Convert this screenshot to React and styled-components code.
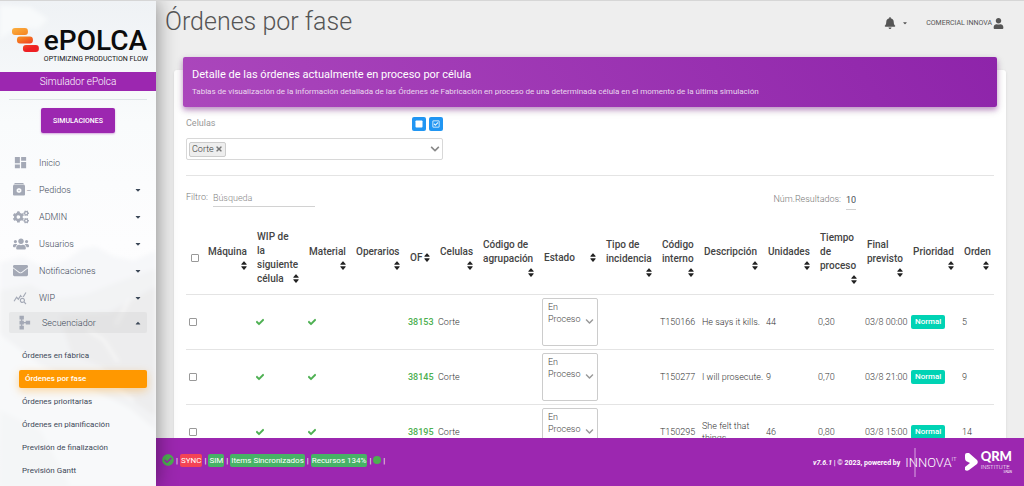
import React, { useState } from 'react'

import styled, { createGlobalStyle, css } from 'styled-components'
import { FaBell, FaUser, FaSort, FaCheck, FaCogs, FaUsers, FaEnvelope, FaChevronDown, FaTimes, FaCheckCircle, FaCaretDown, FaCaretUp, FaSquare, FaRegCheckSquare } from 'react-icons/fa'
import { MdDashboard, MdQueryStats, MdSchema } from 'react-icons/md'

const menu = [
    { label: 'Inicio', icon: <MdDashboard size={15} /> },
    { label: 'Pedidos', icon: <BoxIcon />, caret: true },
    { label: 'ADMIN', icon: <FaCogs size={16} />, caret: true },
    { label: 'Usuarios', icon: <FaUsers size={16} />, caret: true },
    { label: 'Notificaciones', icon: <FaEnvelope size={15} />, caret: true },
    { label: 'WIP', icon: <MdQueryStats size={14} />, caret: true },
]

const submenu = [
    'Órdenes en fábrica',
    'Órdenes por fase',
    'Órdenes prioritarias',
    'Órdenes en planificación',
    'Previsión de finalización',
    'Previsión Gantt',
]

const columns = [
    { label: 'Máquina', width: 49 },
    { label: 'WIP de\nla\nsiguiente\ncélula', width: 52 },
    { label: 'Material', width: 47 },
    { label: 'Operarios', width: 54 },
    { label: 'OF', width: 30 },
    { label: 'Celulas', width: 43 },
    { label: 'Código de\nagrupación', width: 61 },
    { label: 'Estado', width: 62 },
    { label: 'Tipo de\nincidencia', width: 56 },
    { label: 'Código\ninterno', width: 42 },
    { label: 'Descripción', width: 64 },
    { label: 'Unidades', width: 52 },
    { label: 'Tiempo\nde\nproceso', width: 47 },
    { label: 'Final\nprevisto', width: 46 },
    { label: 'Prioridad', width: 51 },
    { label: 'Orden', width: 35 },
]

const orders = [
    { of: '38153', code: 'T150166', desc: 'He says it kills.', units: 44, time: '0,30', end: '03/8 00:00', order: 5 },
    { of: '38145', code: 'T150277', desc: 'I will prosecute.', units: 9, time: '0,70', end: '03/8 21:00', order: 9 },
    { of: '38195', code: 'T150295', desc: 'She felt that\nthings', units: 46, time: '0,80', end: '03/8 15:00', order: 14 },
]

function BoxIcon() {
    return (
        <>
            <svg width="12" height="13" viewBox="0 0 12 13" fill="currentColor" aria-hidden="true">
                <path d="M2 0h8l1.500 1.500h-11z" />
                <path fillRule="evenodd" d="M1 2h10a1 1 0 0 1 1 1v8.500a1 1 0 0 1-1 1H1a1 1 0 0 1-1-1V3a1 1 0 0 1 1-1zM5 5.200L3.600 6.500v2L5 9.800h2l1.400-1.300v-2L7 5.200z" />
                <circle cx="6" cy="7.500" r="0.700" />
            </svg>
            <small>_</small>
        </>
    )
}

const Mountain = () => (
    <Backdrop viewBox="0 0 156 486" preserveAspectRatio="none" aria-hidden="true">
        <defs>
            <linearGradient id="sky" x1="0" y1="0" x2="0" y2="1">
                <stop offset="0" stopColor="#eff2f5" />
                <stop offset="0.25" stopColor="#f9fbfc" />
                <stop offset="0.5" stopColor="#fdfdfe" />
                <stop offset="1" stopColor="#f6f7f8" />
            </linearGradient>
            <filter id="haze"><feGaussianBlur stdDeviation="2" /></filter>
        </defs>
        <rect width="156" height="486" fill="url(#sky)" />
        <g filter="url(#haze)">
            <path d="M0 4l30 2 18 12-10 10-20-2-18 12z" fill="#f8fafb" />
            <path d="M0 262l22-6 20 10 24-6 16-12 14-2 18 10 20 4 22-10v60H0z" fill="#f6f7f9" />
            <path d="M0 290l30-6 26 14 30-4 30-12 40-14v218H90L40 380 0 340z" fill="#f2f3f4" />
            <path d="M60 316l50-4 46-26v130l-30-20-24-30-30-12z" fill="#ededee" />
            <path d="M0 334l40 30 50 24 40 20 26 22v56H0z" fill="#f8f9fa" />
            <path d="M0 410l40 20 30 56H0z" fill="#f4f6f7" />
            <path d="M88 330l16 10 14 22M130 298l-14 26M96 376l24 14 14 10" stroke="#f7f7f7" strokeWidth="3" fill="none" />
        </g>
    </Backdrop>
)

const App = () => {
    const [active, setActive] = useState('Órdenes por fase')
    return (
        <>
            <GlobalStyle />
            <Layout>
                <Sidebar>
                    <Mountain />
                    <Brand>
                        <svg width="27" height="24" viewBox="0 0 27 24" aria-hidden="true">
                            <defs>
                                <linearGradient id="mark" gradientUnits="userSpaceOnUse" x1="0" y1="0" x2="10" y2="24">
                                    <stop offset="0" stopColor="#fbb040" />
                                    <stop offset="0.5" stopColor="#f58220" />
                                    <stop offset="1" stopColor="#ee2024" />
                                </linearGradient>
                            </defs>
                            <g fill="url(#mark)">
                                <rect x="0" y="0" width="16" height="7" rx="3" />
                                <rect x="5" y="8.500" width="16" height="7" rx="3" />
                                <rect x="11" y="17" width="16" height="7" rx="3" />
                            </g>
                        </svg>
                        <div>
                            <strong>ePOLCA</strong>
                            <span>OPTIMIZING PRODUCTION FLOW</span>
                        </div>
                    </Brand>
                    <Simulator>Simulador ePolca</Simulator>
                    <Divider />
                    <SimButton type="button">SIMULACIONES</SimButton>
                    <nav>
                        {menu.map((item) => (
                            <MenuLink href="#" key={item.label}>
                                <i>{item.icon}</i>
                                <span>{item.label}</span>
                                {item.caret && <FaCaretDown size={8} />}
                            </MenuLink>
                        ))}
                        <MenuLink href="#" $open>
                            <i><MdSchema size={15} /></i>
                            <span>Secuenciador</span>
                            <FaCaretUp size={8} />
                        </MenuLink>
                        <SubMenu>
                            {submenu.map((label) => (
                                <li key={label}>
                                    <SubLink href="#" $active={label === active} onClick={() => setActive(label)}>{label}</SubLink>
                                </li>
                            ))}
                        </SubMenu>
                    </nav>
                </Sidebar>

                <Main>
                    <TopBar>
                        <h1>Órdenes por fase</h1>
                        <BellButton type="button" aria-label="Avisos">
                            <FaBell size={12} />
                            <FaCaretDown size={6} />
                        </BellButton>
                        <UserLink href="#">COMERCIAL INNOVA <FaUser size={11} /></UserLink>
                    </TopBar>

                    <Content>
                        <Card>
                            <CardHeader>
                                <h2>Detalle de las órdenes actualmente en proceso por célula</h2>
                                <p>Tablas de visualización de la información detallada de las Órdenes de Fabricación en proceso de una determinada célula en el momento de la última simulación</p>
                            </CardHeader>

                            <CellPicker>
                                <PickerTop>
                                    <span>Celulas</span>
                                    <BlueButton type="button" aria-label="Quitar todas"><FaSquare size={8} /></BlueButton>
                                    <BlueButton type="button" aria-label="Seleccionar todas"><FaRegCheckSquare size={8} /></BlueButton>
                                </PickerTop>
                                <MultiSelect>
                                    <Tag>Corte <button type="button" aria-label="Quitar Corte"><FaTimes size={8} /></button></Tag>
                                    <button type="button" aria-label="Abrir lista"><FaChevronDown size={10} /></button>
                                </MultiSelect>
                            </CellPicker>

                            <Filters>
                                <label htmlFor="filter">Filtro:</label>
                                <LineInput id="filter" placeholder="Búsqueda" $width={102} />
                                <label htmlFor="results">Núm.Resultados:</label>
                                <LineInput id="results" defaultValue="10" $width={10} $strong />
                            </Filters>

                            <Table>
                                <colgroup>
                                    <col width={17} />
                                    {columns.map((c) => <col key={c.label} width={c.width} />)}
                                </colgroup>
                                <thead>
                                    <tr>
                                        <th><Check type="checkbox" aria-label="Seleccionar todo" /></th>
                                        {columns.map((c) => (
                                            <th key={c.label}>{c.label}<SortIcon preserveAspectRatio="none" /></th>
                                        ))}
                                    </tr>
                                </thead>
                                <tbody>
                                    {orders.map((o) => (
                                        <tr key={o.of}>
                                            <td><Check type="checkbox" aria-label={o.of} /></td>
                                            <td />
                                            <td><Tick /></td>
                                            <td><Tick /></td>
                                            <td />
                                            <td><OrderLink href="#">{o.of}</OrderLink></td>
                                            <td>Corte</td>
                                            <td />
                                            <td>
                                                <StateBox>
                                                    <span>En Proceso</span>
                                                    <FaChevronDown size={9} />
                                                    <select aria-label={`Estado ${o.of}`}>
                                                        <option>En Proceso</option>
                                                    </select>
                                                </StateBox>
                                            </td>
                                            <td />
                                            <td>{o.code}</td>
                                            <td>{o.desc}</td>
                                            <td>{o.units}</td>
                                            <td>{o.time}</td>
                                            <td>{o.end}</td>
                                            <td><Priority>Normal</Priority></td>
                                            <td>{o.order}</td>
                                        </tr>
                                    ))}
                                </tbody>
                            </Table>
                        </Card>
                    </Content>

                    <Footer>
                        <Status>
                            <FaCheckCircle size={12} />|
                            <Badge $red>SYNC</Badge>|
                            <Badge>SIM</Badge>|
                            <Badge>Items Sincronizados</Badge>|
                            <Badge>Recursos 134%</Badge>|
                            <Dot />|
                        </Status>
                        <Version><em>v7.6.1</em> | © 2023, powered by</Version>
                        <Innova>
                            <svg width="2" height="29" viewBox="0 0 2 29" aria-hidden="true"><path d="M1 0v29" stroke="#d9a8e2" /></svg>
                            INNOVA<sup>IT</sup>
                        </Innova>
                        <Qrm>
                            <svg width="13" height="18" viewBox="0 0 13 18" fill="#fff" aria-hidden="true">
                                <path d="M0 2Q0 0 2 0h2l8 7q1.500 2 0 4l-8 6q-2 1.500-4 0v-3l5-4-4-2q-1-1-1-3z" />
                            </svg>
                            <div>
                                <strong>QRM</strong>
                                <span>INSTITUTE</span>
                                <small>SPAIN</small>
                            </div>
                        </Qrm>
                    </Footer>
                </Main>
            </Layout>
        </>
    )
}

export default App

const GlobalStyle = createGlobalStyle`
    * {
        box-sizing: border-box;
    }

    body {
        margin: 0;
        font-family: Roboto, "Liberation Sans", sans-serif;
        font-size: 9px;
        font-weight: 300;
        color: #3c4858;
        background: #eee;
    }

    a {
        color: inherit;
        text-decoration: none;
    }

    button {
        font: inherit;
        border: 0;
        padding: 0;
        background: none;
        color: inherit;
        cursor: pointer;
    }
`

const Layout = styled.div`
    display: flex;
    height: 100vh;
    overflow: hidden;
    border-top: 1px solid #d6d6d6;
`

const Sidebar = styled.aside`
    position: relative;
    z-index: 2;
    flex: 0 0 156px;
    min-width: 0;
    display: flex;
    flex-direction: column;
    box-shadow: 0 0 20px rgba(0, 0, 0, .45);

    nav {
        display: flex;
        flex-direction: column;
        padding: 16px 9px 0;
    }
`

const Backdrop = styled.svg`
    position: absolute;
    inset: 0;
    width: 100%;
    height: 100%;
    z-index: -1;
`

const Brand = styled.div`
    display: flex;
    gap: 5px;
    padding: 27px 8px 0 12px;
    height: 71px;

    strong {
        display: block;
        font-size: 28px;
        line-height: 25px;
        font-weight: 500;
        color: #0c0c0c;
    }

    span {
        display: block;
        margin-top: 2px;
        font-size: 7px;
        line-height: 9px;
        font-weight: 400;
        color: #111;
        white-space: nowrap;
    }
`

const Simulator = styled.div`
    background: #9c27b0;
    color: #fff;
    font-size: 10px;
    line-height: 19px;
    text-align: center;
`

const Divider = styled.hr`
    width: 138px;
    margin: 8px auto;
    border: 0;
    border-top: 1px solid #dfe4e8;
`

const SimButton = styled.button`
    align-self: center;
    width: 74px;
    height: 25px;
    border-radius: 2px;
    background: #9c27b0;
    color: #fff;
    font-size: 7px;
    font-weight: 500;
    box-shadow: 0 1px 2px rgba(156, 39, 176, .4);
`

const MenuLink = styled.a`
    display: flex;
    align-items: center;
    height: 27px;
    padding: 0 5px 0 4px;
    border-radius: 2px;

    i {
        display: flex;
        width: 26px;
        color: #a4a9b6;
    }

    small {
        font-size: 8px;
        font-style: normal;
        font-weight: 500;
        margin-left: 2px;
    }

    span {
        flex: 1;
    }

    ${({ $open }) => $open && css`
        height: 21px;
        margin-top: 1px;
        padding-left: 8px;
        background: rgba(200, 200, 200, .25);

        i {
            width: 25px;
        }
    `}
`

const SubMenu = styled.ul`
    list-style: none;
    margin: 11px 0 0 10px;
    padding: 0;

    li {
        height: 23px;
        display: flex;
        align-items: center;
    }
`

const SubLink = styled.a`
    flex: 1;
    padding: 0 3px;
    font-size: 8px;
    line-height: 18px;
    font-weight: 400;

    ${({ $active }) => $active && css`
        padding: 0 6px;
        border-radius: 2px;
        background: #ff9800;
        color: #fff;
        font-weight: 500;
        box-shadow: 0 3px 8px rgba(255, 152, 0, .35);
    `}
`

const Main = styled.main`
    flex: 1;
    min-width: 0;
    display: flex;
    flex-direction: column;
    background: #eee;
`

const TopBar = styled.header`
    display: flex;
    align-items: center;
    height: 44px;
    flex-shrink: 0;
    padding: 0 20px 0 9px;
    color: #555;

    h1 {
        flex: 1;
        margin: 0;
        font-size: 25px;
        line-height: 40px;
        padding-bottom: 3px;
        font-weight: 300;
    }
`

const BellButton = styled.button`
    display: flex;
    align-items: center;
    gap: 6px;
    margin-right: 18px;
`

const UserLink = styled.a`
    display: flex;
    align-items: center;
    gap: 1px;
    font-size: 7px;
    font-weight: 400;
`

const Content = styled.div`
    flex: 1;
    min-height: 0;
    overflow: hidden;
    padding: 25px 18px 0;
`

const Card = styled.section`
    padding: 0 12px;
    border-radius: 3px;
    background: #fff;
    box-shadow: 0 1px 3px rgba(0, 0, 0, .1);
`

const CardHeader = styled.div`
    position: relative;
    top: -13px;
    margin: 0 -3px -13px;
    padding: 9px;
    border-radius: 2px;
    background: linear-gradient(60deg, #ab47bc, #8e24aa);
    box-shadow: 0 3px 10px rgba(0, 0, 0, .14), 0 3px 5px rgba(156, 39, 176, .4);
    color: #fff;

    h2 {
        margin: 0;
        font-size: 11px;
        line-height: 17px;
        font-weight: 400;
    }

    p {
        margin: 2px 0 0;
        font-size: 8px;
        line-height: 13px;
        font-weight: 400;
        color: rgba(255, 255, 255, .8);
    }
`

const CellPicker = styled.div`
    width: 257px;
    padding-top: 10px;
`

const PickerTop = styled.div`
    display: flex;
    gap: 3px;
    color: #999;
    font-weight: 400;

    span {
        flex: 1;
        line-height: 12px;
    }
`

const BlueButton = styled.button`
    display: flex;
    align-items: center;
    justify-content: center;
    width: 14px;
    height: 14px;
    border-radius: 2px;
    background: #2196f3;
    color: #fff;
`

const MultiSelect = styled.div`
    display: flex;
    align-items: center;
    justify-content: space-between;
    height: 22px;
    margin-top: 7px;
    padding: 0 2px;
    border: 1px solid #d8d8d8;
    border-radius: 2px;
    color: #888;

    button {
        display: flex;
    }
`

const Tag = styled.span`
    display: flex;
    align-items: center;
    gap: 1px;
    height: 15px;
    padding: 0 2px;
    border: 1px solid #ccc;
    border-radius: 2px;
    background: #eee;
    color: #333;

    svg {
        color: #777;
    }
`

const Filters = styled.div`
    display: flex;
    margin-top: 15px;
    padding: 14px 138px 0 0;
    border-top: 1px solid #e4e4e4;
    color: #777;

    label {
        line-height: 14px;
    }

    input + label {
        margin-left: auto;
        line-height: 18px;
    }
`

const LineInput = styled.input`
    width: ${({ $width }) => $width}px;
    height: ${({ $strong }) => ($strong ? 20 : 17)}px;
    margin-left: 5px;
    padding: 0;
    border: 0;
    border-bottom: 1px solid #d2d2d2;
    border-radius: 0;
    background: none;
    color: #495057;
    font: inherit;
    font-weight: ${({ $strong }) => ($strong ? 400 : 300)};

    &::placeholder {
        color: #888;
    }
`

const Table = styled.table`
    width: 100%;
    margin-top: 12px;
    table-layout: fixed;
    border-collapse: collapse;

    th {
        padding: 8px 5px;
        font-size: 10px;
        line-height: 14px;
        font-weight: 500;
        text-align: left;
        white-space: pre-line;
        color: #444;
    }

    td {
        height: 55px;
        padding: 0 0 0 3px;
        line-height: 12px;
        color: #333;
    }

    tr {
        border-bottom: 1px solid #e4e4e4;
    }

    td:nth-child(11),
    td:nth-child(12),
    td:nth-child(15) {
        white-space: pre;
    }
`

const SortIcon = styled(FaSort)`
    float: right;
    width: 6px;
    height: 11px;
    margin-top: 1px;
    color: #222;
`

const Check = styled.input`
    appearance: none;
    display: block;
    width: 8px;
    height: 8px;
    margin: 0;
    border: 1px solid #999;
    border-radius: 1px;
    background: #fff;

    &:checked {
        background: #2196f3;
    }
`

const Tick = styled(FaCheck)`
    display: block;
    width: 8px;
    height: 8px;
    margin-left: 1px;
    color: #4caf50;
    stroke: #4caf50;
    stroke-width: 40px;
`

const OrderLink = styled.a`
    color: #4caf50;
    font-weight: 500;
`

const StateBox = styled.div`
    position: relative;
    display: flex;
    height: 48px;
    width: 56px;
    padding: 2px 3px 4px 5px;
    border: 1px solid #ccc;
    border-radius: 2px;
    color: #444;

    span {
        flex: 1;
    }

    svg {
        align-self: center;
        color: #999;
    }

    select {
        position: absolute;
        inset: 0;
        width: 100%;
        opacity: 0;
    }
`

const Priority = styled.span`
    display: inline-block;
    padding: 0 4px;
    border-radius: 2px;
    background: #00d3b4;
    color: #fff;
    font-size: 8px;
    line-height: 14px;
    font-weight: 500;
`

const Footer = styled.footer`
    display: flex;
    align-items: center;
    height: 48px;
    flex-shrink: 0;
    padding: 0 12px 0 6px;
    background: #9c27b0;
    color: #fff;
    font-size: 8px;
    font-weight: 400;
`

const Status = styled.div`
    display: flex;
    align-items: center;
    gap: 2px;
    flex: 1;
    padding-bottom: 4px;

    svg {
        color: #4caf50;
    }
`

const Badge = styled.span`
    padding: 0 1px;
    border-radius: 2px;
    line-height: 13px;
    background: ${({ $red }) => ($red ? '#f44355' : '#47b266')};
`

const Dot = styled.span`
    width: 8px;
    height: 8px;
    border-radius: 50%;
    background: #4caf50;
`

const Version = styled.span`
    padding-top: 2px;
    font-size: 7px;
    font-weight: 700;
`

const Innova = styled.div`
    position: relative;
    display: flex;
    align-items: center;
    margin-left: 5px;
    font-size: 13px;
    font-weight: 300;

    svg {
        position: absolute;
        left: 9px;
    }

    sup {
        align-self: flex-start;
        font-size: 6px;
        line-height: 8px;
    }
`

const Qrm = styled.div`
    display: flex;
    align-items: center;
    gap: 3px;
    margin-left: 8px;

    strong,
    span,
    small {
        display: block;
    }

    strong {
        font-family: Lato, sans-serif;
        font-size: 13px;
        line-height: 13px;
        font-weight: 900;
    }

    span {
        font-size: 6px;
        line-height: 7px;
        font-weight: 300;
    }

    small {
        font-size: 3px;
        line-height: 5px;
        text-align: right;
    }
`
